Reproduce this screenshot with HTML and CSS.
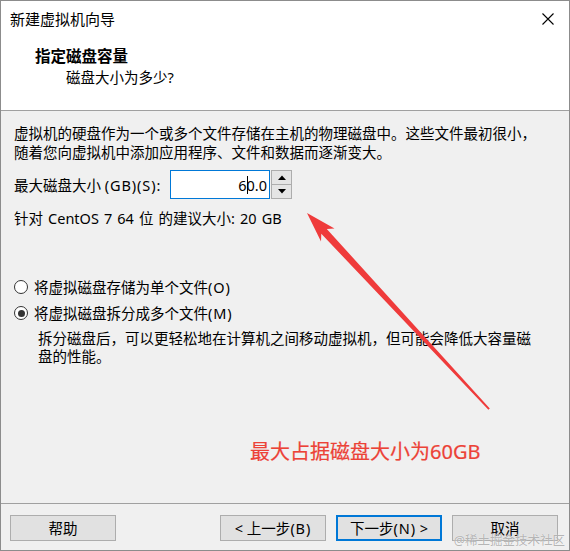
FILE: index.html
```html
<!DOCTYPE html>
<html lang="zh-CN">
<head>
<meta charset="utf-8">
<title>新建虚拟机向导</title>
<link rel="stylesheet" href="styles.css">
</head>
<body>
<div class="window">
  <div class="titlebar">
    <span class="title">新建虚拟机向导</span>
    <svg class="close" width="12" height="12" viewBox="0 0 12 12"><path d="M0.5 0.5 L11.5 11.5 M11.5 0.5 L0.5 11.5" stroke="#000" stroke-width="1.1" fill="none"/></svg>
  </div>
  <div class="header">
    <div class="h-title">指定磁盘容量</div>
    <div class="h-sub">磁盘大小为多少?</div>
  </div>
  <div class="content">
    <p class="para">虚拟机的硬盘作为一个或多个文件存储在主机的物理磁盘中。这些文件最初很小，<br>随着您向虚拟机中添加应用程序、文件和数据而逐渐变大。</p>
    <div class="size-row">
      <span class="size-label">最大磁盘大小 <span class="acc">(GB)(S):</span></span>
      <div class="spin-input"><span>6</span><span class="caret"></span><span>0.0</span></div>
      <div class="spin-btns">
        <div class="spin-btn"><svg width="8" height="5" viewBox="0 0 8 5"><path d="M0 5 L4 0.5 L8 5 Z" fill="#000"/></svg></div>
        <div class="spin-btn"><svg width="8" height="5" viewBox="0 0 8 5"><path d="M0 0 L4 4.5 L8 0 Z" fill="#000"/></svg></div>
      </div>
    </div>
    <p class="recommend">针对 CentOS 7 64 位 的建议大小: 20 GB</p>
    <div class="radios">
      <div class="radio-row"><span class="radio"></span><span>将虚拟磁盘存储为单个文件<span class="acc">(O)</span></span></div>
      <div class="radio-row"><span class="radio checked"></span><span>将虚拟磁盘拆分成多个文件<span class="acc">(M)</span></span></div>
      <p class="desc">拆分磁盘后，可以更轻松地在计算机之间移动虚拟机，但可能会降低大容量磁<br>盘的性能。</p>
    </div>
  </div>
  <div class="footer">
    <button class="btn">帮助</button>
    <div class="nav">
      <button class="btn">&lt; 上一步<span class="acc">(B)</span></button>
      <button class="btn primary">下一步<span class="acc">(N)</span> &gt;</button>
      <button class="btn">取消</button>
    </div>
  </div>
  <svg class="arrow" width="570" height="551" viewBox="0 0 570 551">
    <polygon points="307,213 334.5,228.5 326.8,229 489.8,408.4 488.4,409.8 321.3,233.8 321,241.5" fill="#ef3b3b"/>
  </svg>
  <div class="annotation">最大占据磁盘大小为60GB</div>
  <div class="watermark">@稀土掘金技术社区</div>
</div>
</body>
</html>
```

FILE: styles.css
```css
* { box-sizing: border-box; }
html, body { margin: 0; padding: 0; }
body {
  width: 570px;
  height: 551px;
  font-family: "Noto Sans", "Noto Sans CJK SC", sans-serif;
  font-size: 14.5px;
  color: #000;
  background: #fff;
}
.window {
  position: relative;
  width: 570px;
  height: 551px;
  border: 1px solid #8c8c8c;
  display: flex;
  flex-direction: column;
  background: #f0f0f0;
  overflow: hidden;
}
.titlebar {
  height: 36px;
  background: #fff;
  display: flex;
  align-items: center;
  justify-content: space-between;
  padding: 0 15px 0 9px;
}
.title { font-size: 15px; line-height: 20px; }
.close { display: block; }
.header {
  height: 74px;
  background: #fff;
  border-bottom: 1px solid #a0a0a0;
  padding: 9px 0 0 34px;
}
.h-title { font-size: 15.5px; font-weight: bold; line-height: 20px; }
.h-sub { line-height: 20px; margin-top: 1px; padding-left: 31px; }
.content {
  flex: 1;
  padding: 13px 13px 0 13px;
}
.para { margin: 0; line-height: 19px; }
.acc { letter-spacing: 0.9px; }
.size-row {
  display: flex;
  align-items: center;
  margin-top: 8px;
  height: 29px;
}
.size-label { width: 156px; white-space: nowrap; }
.spin-input {
  width: 100px;
  height: 29px;
  border: 1px solid #0078d7;
  background: #fff;
  display: flex;
  align-items: center;
  justify-content: flex-end;
  padding-right: 2px;
  font-size: 14.5px;
}
.caret {
  display: inline-block;
  width: 1px;
  height: 18px;
  background: #000;
  margin: 0 -1px 0 0;
}
.spin-btns {
  margin-left: 1px;
  width: 21px;
  height: 29px;
  display: flex;
  flex-direction: column;
  border: 1px solid #adadad;
  background: #e5e5e5;
}
.spin-btn {
  flex: 1;
  display: flex;
  align-items: center;
  justify-content: center;
}
.spin-btn + .spin-btn { border-top: 1px solid #adadad; }
.spin-btn svg { display: block; }
.recommend { margin: 10px 0 0 0; line-height: 19px; word-spacing: 1.3px; }
.radios { margin-top: 49px; }
.radio-row {
  display: flex;
  align-items: center;
  line-height: 20px;
  height: 20px;
  margin-bottom: 6px;
}
.radio {
  width: 14px;
  height: 14px;
  border: 1px solid #333;
  border-radius: 50%;
  background: #fff;
  margin: 0 6px 0 0;
  position: relative;
}
.radio.checked::after {
  content: "";
  position: absolute;
  left: 2.5px;
  top: 2.5px;
  width: 7px;
  height: 7px;
  border-radius: 50%;
  background: #333;
}
.desc { margin: 2px 0 0 24px; line-height: 18px; }
.footer {
  height: 47px;
  border-top: 1px solid #a0a0a0;
  display: flex;
  justify-content: space-between;
  padding: 11px 11px 0 9px;
}
.nav { display: flex; gap: 10px; }
.btn {
  width: 106px;
  height: 26px;
  border: 1px solid #adadad;
  background: #e1e1e1;
  font-family: inherit;
  font-size: 14.5px;
  color: #000;
  padding: 0;
  line-height: 20px;
}
.btn.primary { border: 2px solid #0078d7; }
.arrow { position: absolute; left: -1px; top: -1px; pointer-events: none; }
.annotation {
  position: absolute;
  left: 249px;
  top: 438px;
  font-size: 20px;
  line-height: 26px;
  color: #ec4237;
  white-space: nowrap;
  -webkit-text-stroke: 0.2px #ec4237;
}
.watermark {
  position: absolute;
  right: 4px;
  bottom: 1px;
  font-size: 12.5px;
  line-height: 16px;
  color: rgba(120,120,120,0.55);
  text-shadow: 0 0 1px #fff;
}
```
